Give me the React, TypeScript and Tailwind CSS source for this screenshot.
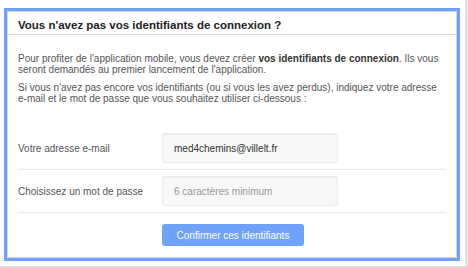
import React from 'react';

const App: React.FC = () => {
  return (
    <div className="w-[468px] h-[268px] bg-white flex flex-col overflow-hidden" style={{ fontFamily: '"Liberation Sans", Arial, sans-serif' }}>
      <div className="flex h-[266px]">
        <div className="w-[465px] pl-[4px] pt-[8px]">
          <div className="w-[456px] h-[253px] border-[3px] border-[#6fa0fa] flex">
            <div className="flex-1 border border-[#d4d4d4] flex flex-col">
              <div className="h-[23px] border-b border-[#d6d6d6] px-[10px] pt-[7px]">
                <h2 className="text-[11.5px] font-bold text-[#222] leading-[12px]">Vous n'avez pas vos identifiants de connexion ?</h2>
              </div>
              <div className="px-[10px] pt-[18px] text-[10px] leading-[11px] text-[#555]">
                <p>
                  Pour profiter de l'application mobile, vous devez créer <b className="text-[#333]">vos identifiants de connexion</b>. Ils vous seront demandés au premier lancement de l'application.
                </p>
                <p className="mt-[7px]">
                  Si vous n'avez pas encore vos identifiants (ou si vous les avez perdus), indiquez votre adresse e-mail et le mot de passe que vous souhaitez utiliser ci-dessous :
                </p>
                <div className="mt-[29px] flex items-center h-[30px]">
                  <label className="w-[144px]">Votre adresse e-mail</label>
                  <input
                    type="text"
                    defaultValue="med4chemins@villelt.fr"
                    className="w-[176px] h-[30px] px-[11px] bg-[#f8f8f8] border border-[#ececec] rounded-[2px] shadow-[inset_0_1px_2px_rgba(0,0,0,0.06)] text-[10px] text-[#333] outline-none"
                  />
                </div>
                <div className="h-px bg-[#e8e8e8] my-[6px]" />
                <div className="flex items-center h-[30px]">
                  <label className="w-[144px]">Choisissez un mot de passe</label>
                  <input
                    type="password"
                    placeholder="6 caractères minimum"
                    className="w-[176px] h-[30px] px-[11px] bg-[#f8f8f8] border border-[#ececec] rounded-[2px] shadow-[inset_0_1px_2px_rgba(0,0,0,0.06)] text-[10px] text-[#333] placeholder:text-[#999] outline-none"
                  />
                </div>
                <div className="h-px bg-[#e8e8e8] mt-[6px]" />
                <div className="pl-[144px] pt-[11px]">
                  <button
                    type="button"
                    className="w-[142px] h-[22px] rounded-[3px] bg-[#6fa2f9] text-white text-[10px]"
                  >
                    Confirmer ces identifiants
                  </button>
                </div>
              </div>
            </div>
          </div>
        </div>
        <div className="w-[3px] bg-[#e4e4e4]" />
      </div>
      <div className="h-[2px] bg-[#dcdcdc]" />
    </div>
  );
};

export default App;
